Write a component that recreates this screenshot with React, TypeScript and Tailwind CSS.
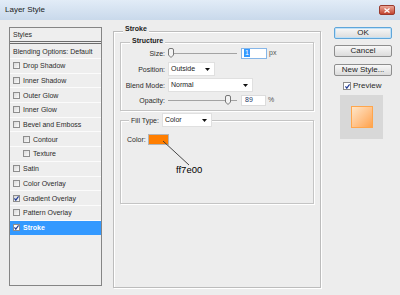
import React from 'react'

const styles = [
  { label: 'Drop Shadow', checked: false, indent: false },
  { label: 'Inner Shadow', checked: false, indent: false },
  { label: 'Outer Glow', checked: false, indent: false },
  { label: 'Inner Glow', checked: false, indent: false },
  { label: 'Bevel and Emboss', checked: false, indent: false },
  { label: 'Contour', checked: false, indent: true },
  { label: 'Texture', checked: false, indent: true },
  { label: 'Satin', checked: false, indent: false },
  { label: 'Color Overlay', checked: false, indent: false },
  { label: 'Gradient Overlay', checked: true, indent: false },
  { label: 'Pattern Overlay', checked: false, indent: false },
  { label: 'Stroke', checked: true, indent: false },
]

function Check({ checked, size = 7, white = false }: { checked: boolean; size?: number; white?: boolean }) {
  return (
    <span
      className={`flex items-center justify-center shrink-0 border border-[#8d8d8d] ${
        white ? 'bg-white' : 'bg-gradient-to-br from-[#d9d9d9] to-[#fafafa]'
      } ${size === 8 ? 'w-[8px] h-[8px]' : 'w-[7px] h-[7px]'}`}
    >
      {checked && (
        <svg width="5" height="5" viewBox="0 0 5 5">
          <path d="M0.4 2.4 L1.8 4.2 L4.6 0.4" fill="none" stroke="#1f3a94" strokeWidth="1.2" />
        </svg>
      )}
    </span>
  )
}

function Arrow() {
  return (
    <svg width="5" height="3" viewBox="0 0 5 3" className="shrink-0">
      <path d="M0 0 H5 L2.5 3 Z" fill="#111" />
    </svg>
  )
}

function Select({ value, width }: { value: string; width: string }) {
  return (
    <div className={`${width} h-[14px] bg-white border border-[#e0e0e0] flex items-center justify-between pl-[2px] pr-[4px] text-[7px] text-[#222]`}>
      <span>{value}</span>
      <Arrow />
    </div>
  )
}

function Slider({ thumb }: { thumb: string }) {
  return (
    <div className="relative w-[69px] h-[12px]">
      <div className="absolute left-0 right-0 top-[6px] h-px bg-[#a3a3a3]" />
      <svg width="6" height="10" viewBox="0 0 6 10" className={`absolute top-[1px] ${thumb}`}>
        <path d="M0.5 2 Q0.5 0.5 2 0.5 H4 Q5.5 0.5 5.5 2 V7 L3 9.5 L0.5 7 Z" fill="#f3f3f3" stroke="#777" strokeWidth="1" />
      </svg>
    </div>
  )
}

function Row({ label, h, className = '', children }: { label: string; h: string; className?: string; children: React.ReactNode }) {
  return (
    <div className={`flex items-center ${h} ${className}`}>
      <span className="w-[44px] text-right text-[7px] text-[#2b2b2b] leading-none">{label}</span>
      <div className="ml-[3px] flex items-center">{children}</div>
    </div>
  )
}

function Btn({ children, primary = false, className = '' }: { children: React.ReactNode; primary?: boolean; className?: string }) {
  return (
    <div
      className={`h-[12px] rounded-[2px] border flex items-center justify-center text-[8px] leading-none text-[#1e1e1e] bg-gradient-to-b from-[#f8f8f8] to-[#dcdcdc] ${
        primary ? 'border-[#5fa6da] shadow-[inset_0_0_0_1px_#bfe0f7]' : 'border-[#8e8e8e]'
      } ${className}`}
    >
      {children}
    </div>
  )
}

export default function App() {
  return (
    <div className="w-[400px] h-[295px] overflow-hidden bg-[#ededed] flex flex-col font-['Liberation_Sans',Arial,sans-serif] text-[#2b2b2b]">
      {/* Title bar */}
      <div className="h-[20px] shrink-0 flex items-center justify-between pl-[5px] pr-[5px] bg-gradient-to-b from-[#e2ecf7] to-[#c9d9eb]">
        <span className="text-[8px] text-[#1c1c1c]">Layer Style</span>
        <div className="w-[16px] h-[10px] rounded-[2px] border border-[#9a3b2e] bg-gradient-to-b from-[#eaa698] to-[#c2432f] flex items-center justify-center">
          <svg width="6" height="5" viewBox="0 0 6 5">
            <path d="M0.5 0.5 L5.5 4.5 M5.5 0.5 L0.5 4.5" stroke="#fff" strokeWidth="1.3" />
          </svg>
        </div>
      </div>

      <div className="flex">
        {/* Styles list */}
        <div className="mt-[7px] ml-[9px] w-[93px] h-[259px] border border-[#858585] bg-[#eeeeee] flex flex-col text-[7px] leading-none">
          <div className="h-[16px] shrink-0 flex items-center pl-[3px] border-b-[3px] border-double border-[#6c6c6c]">Styles</div>
          <div className="h-[15px] shrink-0 flex items-center pl-[3px] border-b border-[#fbfbfb]">Blending Options: Default</div>
          {styles.map((s) => {
            const active = s.label === 'Stroke'
            return (
              <div
                key={s.label}
                className={`h-[14.7px] shrink-0 flex items-center gap-[3px] border-b ${
                  active ? 'bg-[#3399ff] text-white font-bold border-[#3399ff]' : 'border-[#fbfbfb]'
                } ${s.indent ? 'pl-[13px]' : 'pl-[3px]'}`}
              >
                <Check checked={s.checked} white={active} />
                <span>{s.label}</span>
              </div>
            )
          })}
        </div>

        {/* Stroke group */}
        <div className="relative ml-[11px] mt-[11px] w-[208px] h-[257px] border border-[#bcbcbc] shadow-[inset_1px_1px_0_#fff,1px_1px_0_#fff] pl-[6px] pt-[10px]">
          <span className="absolute top-[-7px] left-[9px] px-[2px] bg-[#ededed] text-[7px] leading-[8px] font-bold text-[#222]">Stroke</span>

          {/* Structure */}
          <div className="relative w-[194px] h-[69px] border border-[#c4c4c4] shadow-[inset_1px_1px_0_#fff,1px_1px_0_#fff] pt-[4px] flex flex-col">
            <span className="absolute top-[-6px] left-[9px] px-[2px] bg-[#ededed] text-[7px] leading-[8px] font-bold text-[#222]">Structure</span>
            <Row label="Size:" h="h-[12px]">
              <Slider thumb="left-0" />
              <div className="ml-[4px] w-[26px] h-[11px] bg-white border border-[#86b6e8] flex items-center pl-[2px]">
                <span className="bg-[#3399ff] text-white text-[7px] leading-[8px] px-[1px]">1</span>
              </div>
              <span className="ml-[2px] text-[7px] text-[#555]">px</span>
            </Row>
            <Row label="Position:" h="h-[14px]" className="mt-[3px]">
              <Select value="Outside" width="w-[47px]" />
            </Row>
            <Row label="Blend Mode:" h="h-[14px]" className="mt-[2px]">
              <Select value="Normal" width="w-[85px]" />
            </Row>
            <Row label="Opacity:" h="h-[12px]" className="mt-[2px]">
              <Slider thumb="left-[57px]" />
              <div className="ml-[4px] w-[25px] h-[11px] bg-white border border-[#dcdcdc] flex items-center pl-[3px] text-[7px] text-[#1d3766]">89</div>
              <span className="ml-[2px] text-[7px] text-[#555]">%</span>
            </Row>
          </div>

          {/* Fill type */}
          <div className="relative mt-[9px] w-[194px] h-[84px] border border-[#c4c4c4] shadow-[inset_1px_1px_0_#fff,1px_1px_0_#fff] pt-[13px] pl-[6px]">
            <div className="absolute top-[-8px] left-[8px] flex items-center bg-[#ededed] pl-[2px]">
              <span className="text-[7px] leading-none">Fill Type:</span>
              <div className="ml-[3px]">
                <Select value="Color" width="w-[50px]" />
              </div>
            </div>
            <div className="flex items-center">
              <span className="text-[7px] leading-none">Color:</span>
              <div className="ml-[2px] w-[21px] h-[11px] bg-[#ff7e00] border border-[#b5b5b5]" />
            </div>
            <svg width="80" height="50" viewBox="0 0 80 50" className="absolute left-0 top-0">
              <path d="M42 20 L68 44" stroke="#333" strokeWidth="0.9" />
            </svg>
            <span className="absolute left-[55px] top-[44px] text-[9.5px] leading-[10px] text-black">ff7e00</span>
          </div>
        </div>

        {/* Buttons */}
        <div className="ml-[13px] mt-[7px] w-[58px] flex flex-col">
          <Btn primary>OK</Btn>
          <Btn className="mt-[6px]">Cancel</Btn>
          <Btn className="mt-[7px]">New Style...</Btn>
          <div className="mt-[5px] h-[10px] flex items-center pl-[9px] gap-[2px]">
            <Check checked size={8} white />
            <span className="text-[8px] leading-none">Preview</span>
          </div>
          <div className="mt-[4px] ml-[6px] w-[43px] h-[44px] bg-[#d8d8d8] flex items-center justify-center">
            <div className="w-[22px] h-[22px] border border-[#ffa64c] bg-gradient-to-br from-[#ffe6c8] to-[#ffa24a]" />
          </div>
        </div>
      </div>
    </div>
  )
}
